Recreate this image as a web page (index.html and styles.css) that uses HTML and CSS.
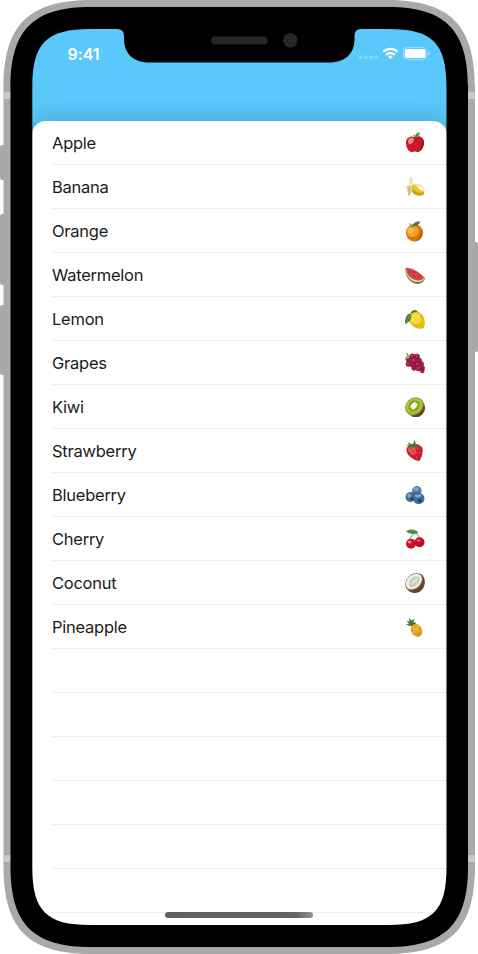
FILE: index.html
```html
<!DOCTYPE html>
<html lang="en">
<head>
<meta charset="utf-8">
<title>Fruits</title>
<link rel="stylesheet" href="styles.css">
</head>
<body>
<main class="phone">
  <section class="screen">
    <header class="status">
      <span class="time">9:41</span>
      <svg class="indicators" width="72" height="16" viewBox="0 0 72 16">
        <g fill="#fff" opacity=".28"><rect x="1" y="11.500" width="3.400" height="3.500" rx="1"/><rect x="6.200" y="11.500" width="3.400" height="3.500" rx="1"/><rect x="11.400" y="11.500" width="3.400" height="3.500" rx="1"/><rect x="16.600" y="11.500" width="3.400" height="3.500" rx="1"/></g>
        <g fill="none" stroke="#fff" stroke-width="2.2"><path d="M25.200 7.800a10.400 10.400 0 0 1 14.400 0"/><path d="M28 10.900a6.400 6.400 0 0 1 8.800 0"/></g>
        <path fill="#fff" d="M29.900 12.700a3.700 3.700 0 0 1 5 0l-2.500 2.600z"/>
        <rect x="45.500" y="3.500" width="23.500" height="12" rx="3.500" fill="none" stroke="#fff" opacity=".35"/>
        <rect x="46.800" y="5" width="20.700" height="9" rx="1.800" fill="#fff"/>
        <path d="M70.300 7.700q1.500.4 1.500 1.800t-1.500 1.800z" fill="#fff" opacity=".45"/>
      </svg>
    </header>
    <ul class="sheet">
      <li class="row"><span>Apple</span>
        <svg class="fruit" viewBox="0 0 22 22"><path d="M11 5.500C14 3 20 4.500 20 10.500c0 4.500-3 9.500-6.200 9.500-1.300 0-1.800-.5-3-.5s-1.600.5-2.900.5C4.500 20 2 15.400 2 10.800 2 5 7.500 3.200 11 5.500z" fill="#cb1829"/><path d="M4 9c.5-3 3-4 4.800-3.300 2 .8 1.200 4-1 5.800S3.700 12 4 9z" fill="#ee8b76"/><path d="M16.500 6c3 3 2 9-1.500 13 4-1 5.500-7 4.700-10.500z" fill="#98101f"/><path d="M8 6q3 1.300 6.500-.2L11 7.300z" fill="#73111a"/><path d="M11 6.800q.1-2.800-1.300-4" fill="none" stroke="#6b4428"/><path d="M11 5c.3-3.400 2.500-4.300 5-4.500-.2 3-2 4.700-5 4.500z" fill="#55983a"/></svg></li>
      <li class="row"><span>Banana</span>
        <svg class="fruit" viewBox="0 0 22 22"><path d="M7 10c2-2.600 4-2.400 6.500-1.700 4.800-.3 6.200 2 6.300 5.300-1.500-2.200-3.500-3.600-6.500-3.200z" fill="#efe0ad"/><path d="M7.500 9.500c4-1.800 6 1 7.500 3 1.200 1.600 3.300 2.500 5.200 2.300.7 2-.2 3.700-1.700 4.500-4 1.400-10-1-11-6z" fill="#edc51d"/><path d="M8 13c3 3 7 4.700 12 3.300-.2 1.700-.8 2.600-1.700 3-4.300 1.300-9-.8-10.700-4.400z" fill="#c9a00f"/><path d="M5.300 10.500C5.500 7 5 3 6.700 1.300l1 .8c1 2.500 1 5.500.5 8.500z" fill="#f5e7c3" stroke="#d8c596" stroke-width=".5"/><path d="M6.300 9.800C4 9.800 2 10.500 1.500 12c1.600.2 1.800 1 2 3s.2 4.200 1.700 5.700c1.200-2.700 2.600-5.400 2.300-9.600z" fill="#dac9a3"/><path d="M5.300 12v7" stroke="#b99d6c" stroke-width=".7"/></svg></li>
      <li class="row"><span>Orange</span>
        <svg class="fruit" viewBox="0 0 22 22"><circle cx="10.500" cy="12.800" r="8.700" fill="#d67a14"/><ellipse cx="8.500" cy="11.200" rx="6" ry="5.700" fill="#f3a32c"/><ellipse cx="7" cy="10.400" rx="2.600" ry="2.800" fill="#f9bf5a"/><path d="M13.500 20.700c4-2 6-7 3-11 1 5-1 8-6 11z" fill="#b75d0d"/><path d="M8 6.700C8.500 3 12 1 16.500 1.500 15 5 12 6.500 8 6.700z" fill="#46803b"/><path d="M7.500 7.500q-.2-2.500-2-4.200" stroke="#7e743a" fill="none"/></svg></li>
      <li class="row"><span>Watermelon</span>
        <svg class="fruit" viewBox="0 0 22 22"><path d="M1.500 4C.5 12 6 19.500 13.300 20c3.500 0 6.700-2.200 7.900-6z" fill="#5a8c3b"/><path d="M1.800 3.900c-.3 7.500 4.700 13.800 11.600 14.100 3.200 0 6.100-1.300 7.300-4.300z" fill="#ecdcae"/><path d="M2 3.600c.4 7.300 5 12.300 11.200 12.800 3 .2 5.600-.8 7-3C14.500 7.500 8.500 4.300 2 3.600z" fill="#d9404c"/><g fill="#64252a"><circle cx="6" cy="8" r=".7"/><circle cx="10" cy="8.200" r=".6"/><circle cx="10" cy="12.300" r=".7"/><circle cx="14.500" cy="12.500" r=".7"/></g></svg></li>
      <li class="row"><span>Lemon</span>
        <svg class="fruit" viewBox="0 0 22 22"><path d="M6.500 4.500q5-5 8.300.5l-4 1.700z" fill="#416f30"/><path d="M5.500 8c2.500-4.200 7.700-5.500 11.500-2.500 3 2.500 3.700 6.500 3.800 9.800.2 1.700-.5 4.900-2 5.300-4.500.8-9.100-.9-11.500-4.200C5 14 4 11 5.500 8z" fill="#e4bd12"/><path d="M7 8c2-3 5.500-3.800 8-2 2.700 3 2.500 8-.5 9.500-3 1.400-7 0-8-3-.4-1.700-.3-3 .5-4.500z" fill="#f8dd3b"/><path d="M7 5.500C2.500 5.500.5 10.500 1.200 16c4.800-1.500 7-6 5.800-10.500z" fill="#537e35"/><path d="M6.300 7q-2 3-3.500 7" stroke="#93aa62" stroke-width=".7" fill="none"/></svg></li>
      <li class="row"><span>Grapes</span>
        <svg class="fruit" viewBox="0 0 22 22"><path d="M7 7.500L2.500 1.200M4 4q-2.500 1-2 4" fill="none" stroke="#779746" stroke-width="1.300"/><g fill="#a51c4a" stroke="#701330" stroke-width=".5"><circle cx="8.500" cy="4.500" r="2.700"/><circle cx="13" cy="4.500" r="2.600"/><circle cx="5" cy="8.500" r="2.600"/><circle cx="10" cy="8.500" r="2.700"/><circle cx="15" cy="8.500" r="2.600"/><circle cx="4.500" cy="12" r="2.500"/><circle cx="8.500" cy="12.500" r="2.600"/><circle cx="13.300" cy="12.500" r="2.600"/><circle cx="17.400" cy="12" r="2.400"/><circle cx="10" cy="16" r="2.400"/><circle cx="14.500" cy="16.500" r="2.500"/><circle cx="18.500" cy="16" r="2.200"/><circle cx="18.300" cy="19" r="2"/></g><g fill="#d4648a"><circle cx="8" cy="4" r=".8"/><circle cx="12.500" cy="4" r=".8"/><circle cx="9.500" cy="8" r=".8"/><circle cx="4" cy="11.500" r=".7"/><circle cx="13" cy="12" r=".8"/><circle cx="14" cy="16" r=".7"/></g></svg></li>
      <li class="row"><span>Kiwi</span>
        <svg class="fruit" viewBox="0 0 22 22"><circle cx="11.800" cy="11.800" r="9.300" fill="#68431f"/><ellipse cx="10.300" cy="10.300" rx="10" ry="8.300" transform="rotate(-43 10.300 10.300)" fill="#91a93e"/><ellipse cx="10.200" cy="10" rx="8.600" ry="7" transform="rotate(-43 10.200 10)" fill="#a9c62d"/><ellipse cx="10" cy="9.800" rx="5.300" ry="4.500" transform="rotate(-43 10 9.800)" fill="#8aa52c" stroke="#5c6f22" stroke-width="1" stroke-dasharray=".9 1.100"/><ellipse cx="10" cy="9.700" rx="4" ry="2.800" transform="rotate(-50 10 9.700)" fill="#f4f1cd"/></svg></li>
      <li class="row"><span>Strawberry</span>
        <svg class="fruit" viewBox="0 0 22 22"><path d="M2.500 9.500C3 5.700 7 4.200 11 4.300c4.500 0 8 2.300 7.800 6.200-.1 4-1.800 8.500-3.500 10.500C10.500 21 1.500 15 2.500 9.500z" fill="#cf1e32"/><path d="M4 9c1-2.800 5-3 7.500-1.500 1 3.300.5 6.700-1.500 7.500-3.500-1-6.500-3.700-6-6z" fill="#e64b51"/><g fill="#edaf50"><circle cx="6" cy="10.500" r=".5"/><circle cx="9.500" cy="9.500" r=".5"/><circle cx="13.500" cy="9" r=".5"/><circle cx="8" cy="14" r=".5"/><circle cx="12" cy="13" r=".5"/><circle cx="15.500" cy="12.500" r=".5"/><circle cx="12.500" cy="17" r=".5"/></g><path d="M2 5l3-.2-1-2.500 3.500 1.800L9 3.700 10.800 0l1 3.900 3.200.2-2.500 1.600 2 2-4.500-.9-2.300 2-.4-2.500L4 7.500l.5-1.600z" fill="#487d38"/></svg></li>
      <li class="row"><span>Blueberry</span>
        <svg class="fruit" viewBox="0 0 22 22"><circle cx="12.800" cy="6.800" r="4.800" fill="#4f7ca8"/><circle cx="6.500" cy="13" r="5" fill="#3f6a96"/><circle cx="14.700" cy="14.500" r="5.800" fill="#406d9c"/><g fill="#7ba6cb"><ellipse cx="12" cy="5" rx="2.800" ry="1.900"/><ellipse cx="5" cy="11.500" rx="2" ry="2.200"/><ellipse cx="14" cy="11.500" rx="3.200" ry="1.900"/></g><path d="M9 13.500l-2 .2-.5 2 2 .5 1.200-1.200zM16 15l-2 1 .5 2 2 .3 1.500-2z" fill="#1d3753"/><path d="M10 9.500q3 1.800 6-.4" stroke="#21476f" fill="none"/></svg></li>
      <li class="row"><span>Cherry</span>
        <svg class="fruit" viewBox="0 0 22 22"><path d="M12.500 4.500Q6 7 5.500 14M11.800 4.500q3.500 3.500 4.500 8.500" fill="none" stroke="#698345" stroke-width="1"/><path d="M2 3.200C6 .5 11.300 1 14.500 4.600 10 6.800 5.300 6.200 2 3.200z" fill="#568c3e"/><circle cx="15.500" cy="14.300" r="5" fill="#b61025"/><circle cx="7" cy="15.800" r="5" fill="#c7152c"/><ellipse cx="5.600" cy="14" rx="2" ry="1.500" fill="#f47c83"/><ellipse cx="14.500" cy="12.500" rx="2.200" ry="1.300" fill="#eb5968"/></svg></li>
      <li class="row"><span>Coconut</span>
        <svg class="fruit" viewBox="0 0 22 22"><path d="M3 17C.5 11 8 1 16.500 1.800c5 3 5.500 9.500 2.500 14.700-4 6-12.500 6-16 .5z" fill="#654328"/><ellipse cx="10" cy="9.700" rx="10" ry="7.300" transform="rotate(-44 10 9.700)" fill="#8b7d62"/><ellipse cx="9.900" cy="9.500" rx="9.100" ry="6.500" transform="rotate(-44 9.900 9.500)" fill="#f0f1e9"/><ellipse cx="10.300" cy="9.700" rx="6.600" ry="4.300" transform="rotate(-44 10.300 9.700)" fill="#c9cfc3"/><path d="M8 10q4-4.500 6-4-1.500 4.500-6 6.500z" fill="#e0e3da"/></svg></li>
      <li class="row"><span>Pineapple</span>
        <svg class="fruit" viewBox="0 0 22 22"><path d="M6 10L1.800 8.400 5 7.700 2.500 4.800l3 .8L5 1.500l2.300 3L10.500 3 9.300 6l2.900.7-1.700 3z" fill="#437b36"/><ellipse cx="12.500" cy="14.300" rx="5.300" ry="6.800" transform="rotate(-30 12.500 14.300)" fill="#db991d"/><ellipse cx="11.800" cy="13.300" rx="3.700" ry="4.300" fill="#f0bd39"/><path d="M7.500 12l8.500 7M10 9.500l7.500 6M7.500 15.500L13.500 9M9.500 18.500l7-7M13 20.500l4.500-5" stroke="#c5801c" stroke-width=".5"/></svg></li>
      <li class="row"></li><li class="row"></li><li class="row"></li><li class="row"></li><li class="row"></li><li class="row"></li>
    </ul>
  </section>
  <svg class="frame" width="478" height="954" viewBox="0 0 478 954">
    <path class="metal" d="M4 145H2Q0 145 0 147V178Q0 180 2 180H4zM4 214H2Q0 214 0 216V283Q0 285 2 285H4zM4 305H2Q0 305 0 307V373Q0 375 2 375H4zM474 242H476Q478 242 478 244V350Q478 352 476 352H474z"/>
    <path class="metal" fill-rule="evenodd" d="M3.500 88C3.500 25 28.500 0 91.500 0H387C450 0 475 25 475 88V866C475 929 450 954 387 954H91.500C28.500 954 3.500 929 3.500 866zM14 87V867C14 921 36.500 943.500 90.500 943.500H388C442 943.500 464.500 921 464.500 867V87C464.500 33 442 10.500 388 10.500H90.500C36.500 10.500 14 33 14 87z"/>
    <path class="band" d="M3.500 92H11V99H3.500zM468 92H475V99H468zM3.500 855H11V862H3.500zM468 855H475V862H468z"/>
    <path class="bezel" fill-rule="evenodd" d="M10.500 87C10.500 30 33.500 7 90.500 7H388C445 7 468 30 468 87V867C468 924 445 947 388 947H90.500C33.500 947 10.500 924 10.500 867zM32.300 87V867C32.300 911 46.500 925 90.500 925H388.500C432.500 925 446.500 911 446.500 867V87C446.500 43 432.500 29 388.500 29H361Q354.500 29 354.500 36V39C354.500 54 345 62.500 329 62.500H149C134 62.500 124 54 124 39V36Q124 29 117 29H90.500C46.500 29 32.300 43 32.300 87z"/>
    <rect class="sensor" x="211" y="36.500" width="56.500" height="8" rx="4"/>
    <circle class="sensor" cx="290.200" cy="40.300" r="7.200"/>
  </svg>
  <div class="home"></div>
</main>
</body>
</html>
```
FILE: styles.css
```css
* { box-sizing: border-box; }
body { margin: 0; background: #fff; font-family: Inter, "Liberation Sans", sans-serif; }
.phone {
  position: relative;
  width: 478px;
  height: 954px;
  padding: 29px 31.5px 29px 32px;
  overflow: hidden;
}
.screen {
  height: 896px;
  display: flex;
  flex-direction: column;
  overflow: hidden;
  background: #5ac8fa;
  border-radius: 36px;
}
.status {
  flex: 0 0 92px;
  display: flex;
  justify-content: space-between;
  align-items: flex-start;
  padding: 15px 17px 0 35.5px;
}
.time {
  color: #fff;
  font-size: 16px;
  line-height: 20px;
  font-weight: 600;
  letter-spacing: -.1px;
}
.sheet {
  flex: 1;
  margin: 0;
  padding: 0 0 0 20px;
  list-style: none;
  background: #fff;
  border-radius: 14px 14px 0 0;
  box-shadow: 0 0 22px rgba(0, 20, 50, .23);
}
.row {
  height: 44px;
  display: flex;
  align-items: center;
  justify-content: space-between;
  padding: 1px 21px 0 0;
  border-bottom: 1px solid #ededed;
  color: #1b1b1b;
  font-size: 16.5px;
  letter-spacing: -.25px;
}
.fruit { width: 22px; height: 22px; }
.frame { position: absolute; inset: 0; }
.metal { fill: #a9a9a9; }
.band { fill: #c8c8c8; }
.bezel { fill: #000; }
.sensor { fill: #262626; }
.home {
  position: absolute;
  left: 165px;
  top: 912px;
  width: 148px;
  height: 6px;
  border-radius: 3px;
  background: linear-gradient(90deg, #606160, #626562 88%, #929292);
}
```
